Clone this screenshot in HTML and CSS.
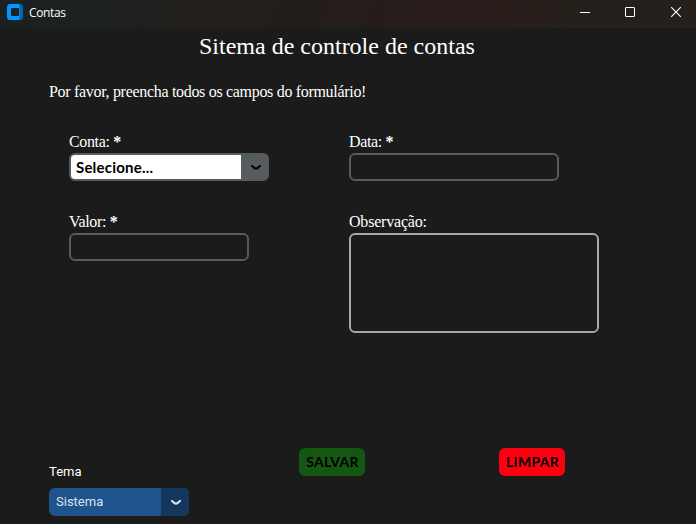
FILE: index.html
```html
<!DOCTYPE html>
<html lang="pt-BR">
<head>
<meta charset="utf-8">
<title>Contas</title>
<link rel="stylesheet" href="styles.css">
</head>
<body>
<header class="titlebar">
  <svg class="logo" width="16" height="16" viewBox="0 0 16 16"><rect width="16" height="16" rx="3.5" fill="#0067b5"/><path d="M3.5 0H12.5V16H3.5A3.5 3.5 0 0 1 0 12.5V3.5A3.5 3.5 0 0 1 3.5 0Z" fill="#0098ff"/><rect x="4" y="4" width="8" height="8" rx="1" fill="#1b2022"/></svg>
  <span class="caption">Contas</span>
  <div class="controls">
    <svg width="10" height="10" viewBox="0 0 10 10"><path d="M0 5.5H10" stroke="#fff"/></svg>
    <svg width="10" height="10" viewBox="0 0 10 10"><rect x=".5" y=".5" width="9" height="9" rx=".5" fill="none" stroke="#fff"/></svg>
    <svg class="close" width="10" height="10" viewBox="0 0 10 10"><path d="M.2 .2L9.8 9.8M9.8 .2L.2 9.8" stroke="#fff" stroke-width="1.1"/></svg>
  </div>
</header>
<main>
  <h1>Sitema de controle de contas</h1>
  <p class="intro">Por favor, preencha todos os campos do formulário!</p>
  <form class="fields">
    <div class="field">
      <span class="label">Conta: <b>*</b></span>
      <div class="select account"><span class="value">Selecione...</span><span class="arrow"><svg width="10" height="5" viewBox="0 0 10 5"><path d="M1 1L3.6 3.1Q5 4.1 6.4 3.1L9 1" fill="none" stroke="currentColor" stroke-width="2" stroke-linecap="round"/></svg></span></div>
    </div>
    <div class="field">
      <span class="label">Data: <b>*</b></span>
      <div class="box date"></div>
    </div>
    <div class="field">
      <span class="label">Valor: <b>*</b></span>
      <div class="box amount"></div>
    </div>
    <div class="field">
      <span class="label wide">Observação:</span>
      <div class="box notes"></div>
    </div>
  </form>
  <footer class="bottom">
    <div class="theme">
      <span class="theme-label">Tema</span>
      <div class="select theme-select"><span class="value">Sistema</span><span class="arrow"><svg width="10" height="5" viewBox="0 0 10 5"><path d="M1 1L3.6 3.1Q5 4.1 6.4 3.1L9 1" fill="none" stroke="currentColor" stroke-width="2.2" stroke-linecap="round"/></svg></span></div>
    </div>
    <div class="button save">SALVAR</div>
    <div class="button clear">LIMPAR</div>
  </footer>
</main>
</body>
</html>
```
FILE: styles.css
```css
* { box-sizing: border-box; }
body {
  margin: 0;
  width: 696px;
  height: 524px;
  overflow: hidden;
  background: #1b1b1b;
  color: #fff;
  font-family: "Liberation Serif", serif;
}
svg { display: block; overflow: visible; }
.titlebar {
  height: 28px;
  padding: 0 15px 4px 7px;
  display: flex;
  align-items: center;
  background: linear-gradient(100deg, #1b2022 0%, #1c2121 13%, #231f1b 29%, #241e1a 45%, #2a1c1a 70%, #25201b 82%, #25201b 100%);
}
.caption {
  margin-left: 6px;
  padding-top: 1px;
  font: 12px/16px "Open Sans", sans-serif;
  letter-spacing: -0.35px;
}
.controls { margin-left: auto; display: flex; gap: 35px; }
.close { margin-left: 1px; }
h1 {
  margin: 0;
  padding: 4px 0 0 199px;
  font-size: 24px;
  line-height: 28px;
  font-weight: 400;
  white-space: nowrap;
}
.intro {
  margin: 22px 0 0 49px;
  font-size: 16px;
  line-height: 20px;
  letter-spacing: -0.31px;
}
.fields {
  margin: 30px 0 0 69px;
  display: grid;
  grid-template-columns: 280px 250px;
  grid-template-rows: 80px 121px;
}
.label {
  display: block;
  height: 21px;
  font-size: 16px;
  line-height: 20px;
  letter-spacing: -0.35px;
}
.wide { letter-spacing: -0.2px; }
.box { border: 2px solid #565b5e; border-radius: 6px; height: 28px; }
.date { width: 210px; }
.amount { width: 180px; }
.notes { width: 250px; height: 100px; border-color: #a5a8a8; }
.select {
  display: flex;
  height: 28px;
  border-radius: 6px;
  overflow: hidden;
}
.value { flex: 1; display: flex; align-items: center; }
.arrow { width: 28px; padding: 1px 0 0 1px; display: flex; align-items: center; justify-content: center; }
.account { width: 200px; background: #565b5e; color: #000; }
.account .value {
  margin: 2px 0 2px 2px;
  padding-left: 5px;
  background: #fff;
  border-radius: 4px 0 0 4px;
  font: bold 15px/20px Lato, sans-serif;
  letter-spacing: 0.2px;
}
.bottom { margin-top: 115px; display: flex; align-items: flex-start; padding-left: 49px; }
.theme { width: 140px; padding-top: 14px; }
.theme-label { display: block; height: 26px; font: 13px/20px Roboto, sans-serif; }
.theme-select { background: #1f538d; }
.theme-select .value { padding-left: 7px; font: 13px/20px Roboto, sans-serif; color: #dce4ee; }
.theme-select .arrow { background: #14375e; color: #dce4ee; }
.button {
  width: 66px;
  height: 28px;
  margin-left: 110px;
  padding-left: 1px;
  border-radius: 6px;
  display: flex;
  align-items: center;
  justify-content: center;
  color: #000;
  font: bold 14px/20px Lato, sans-serif;
  letter-spacing: 0.25px;
}
.save { background: #135713; }
.clear { background: #ff0010; margin-left: 134px; }
```
